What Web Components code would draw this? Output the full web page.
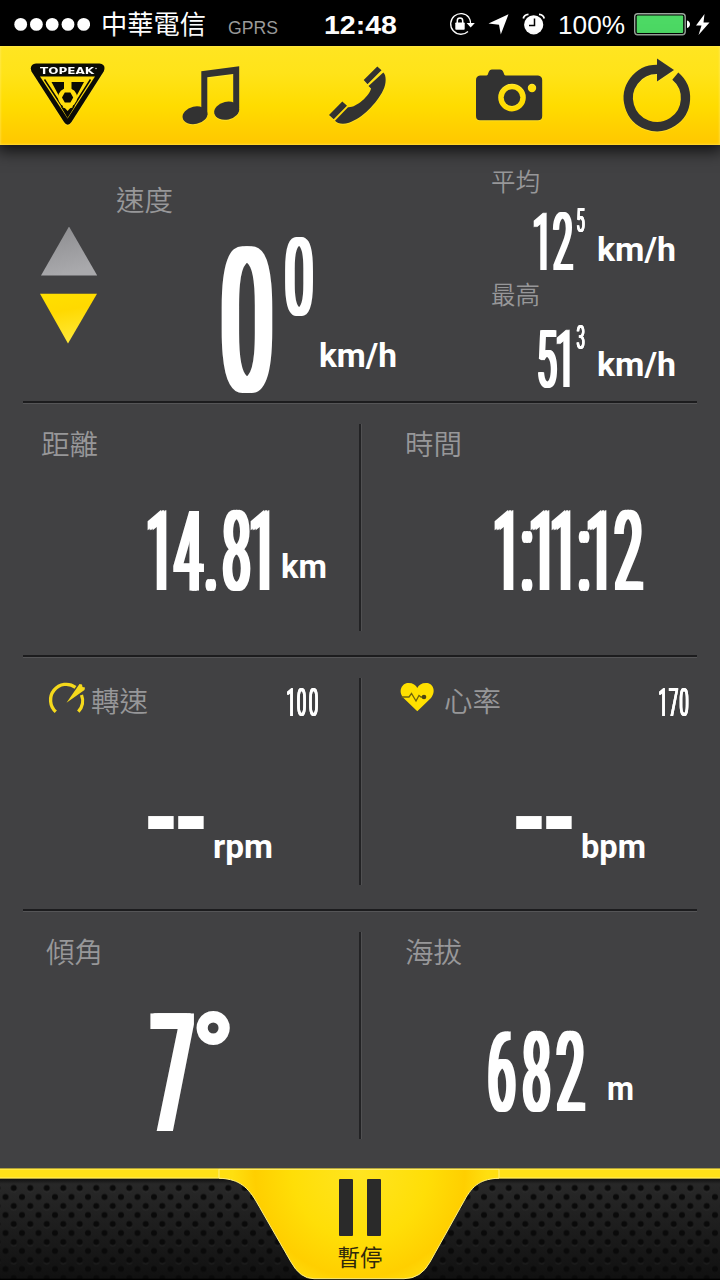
<!DOCTYPE html>
<html lang="zh-Hant">
<head>
<meta charset="utf-8">
<title>Bike computer</title>
<style>
  body {
    margin: 0;
    background: #414143;
    font-family: "Roboto", "Noto Sans CJK TC", sans-serif;
  }
</style>
</head>
<body>
<ride-app></ride-app>

<script>
// One line of text stretched to a given width, baseline on the bottom edge.
class FitText extends HTMLElement {
  connectedCallback() {
    const w = this.getAttribute("w");
    const h = this.getAttribute("h");
    const size = this.getAttribute("size");
    const shadowRoot = this.attachShadow({ mode: "open" });
    shadowRoot.innerHTML = `
<style>
  :host { display: block; flex: none; width: ${w}px; height: ${h}px; }
  svg { display: block; overflow: visible; }
</style>
<svg width="${w}" height="${h}"><text x="0" y="${h}" font-size="${size}" fill="currentColor"
  textLength="${w}" lengthAdjust="spacingAndGlyphs">${this.getAttribute("text")}</text></svg>`;
  }
}
customElements.define("fit-text", FitText);

// Tall narrow digits. "at" holds the centre of each glyph, in px from the left.
// "grow" thickens the squeezed stems sideways only, so they match the bars.
class SlimNumber extends HTMLElement {
  connectedCallback() {
    const w = this.getAttribute("w");
    const cap = Number(this.getAttribute("cap"));
    const squeeze = Number(this.getAttribute("squeeze") || 0.45);
    const grow = this.getAttribute("grow");
    const stroke = this.getAttribute("stroke") || 0;
    const weight = this.getAttribute("weight") || 400;
    const xs = this.getAttribute("at").split(" ").map((x) => (x / squeeze).toFixed(2)).join(" ");
    const filter = grow ? `filter: drop-shadow(${grow}px 0 0 #fff) drop-shadow(-${grow}px 0 0 #fff);` : "";
    const shadowRoot = this.attachShadow({ mode: "open" });
    shadowRoot.innerHTML = `
<style>
  :host { display: block; flex: none; width: ${w}px; height: ${cap}px; ${filter} }
  svg { display: block; overflow: visible; }
  text { font-weight: ${weight}; text-anchor: middle; fill: #fff; stroke: #fff; stroke-width: ${stroke}px; }
</style>
<svg width="${w}" height="${cap}"><text transform="scale(${squeeze} 1)" x="${xs}" y="${cap}"
  font-size="${(cap / 0.711).toFixed(2)}">${this.getAttribute("text")}</text></svg>`;
  }
}
customElements.define("slim-number", SlimNumber);

const statusTemplate = document.createElement("template");
statusTemplate.innerHTML = `
<style>
  :host { display: flex; height: 46px; background: #000; color: #fff; padding-left: 14px; }
  svg { display: block; flex: none; }
  .carrier { margin-left: 11px; font-family: "Noto Sans CJK TC", sans-serif; }
  .net { margin-left: 22px; color: #9b9b9b; }
  .net, .time, .percent { font-family: "Liberation Sans", sans-serif; }
  .time { margin-left: 46px; font-weight: 700; }
  .icons { margin-left: 51px; }
  .percent { margin-left: 10px; }
  .battery { margin-left: 7px; }
</style>
<svg width="76" height="46" fill="#fff">
  <circle cx="6.7" cy="24.4" r="6.4"/><circle cx="22.4" cy="24.4" r="6.4"/><circle cx="38.2" cy="24.4" r="6.4"/>
  <circle cx="54" cy="24.4" r="6.4"/><circle cx="69.7" cy="24.4" r="6.4"/>
</svg>
<fit-text class="carrier" text="中華電信" w="105" h="34" size="26"></fit-text>
<fit-text class="net" text="GPRS" w="50" h="34" size="19"></fit-text>
<fit-text class="time" text="12:48" w="73" h="34" size="26"></fit-text>
<svg class="icons" width="100" height="46" viewBox="448 0 100 46" fill="#fff">
  <path d="M469 17.5A10.3 10.3 0 1 0 468 31.5M467 15.5A10.3 10.3 0 0 1 470.5 24" fill="none" stroke="#fff" stroke-width="1.3"/>
  <path d="M466.6 23h8.2l-4.1 4.6z"/>
  <rect x="455.3" y="22.5" width="9.4" height="7.3" rx=".8"/>
  <path d="M457.3 23v-2.2a2.7 2.7 0 0 1 5.4 0V23" fill="none" stroke="#fff" stroke-width="1.5"/>
  <path d="M508.5 14.2L488.5 23.6L499 24.7L500.8 34.5z"/>
  <circle cx="533.7" cy="24.8" r="9.6"/>
  <path d="M534.5 18.5v7h-5.5" fill="none" stroke="#000" stroke-width="1.5"/>
  <path d="M523.3 18.5c.4-2.3 2.2-4 5.2-4.2M539 14.3c3 .2 4.8 1.9 5.2 4.2" fill="none" stroke="#fff" stroke-width="1.8"/>
</svg>
<fit-text class="percent" text="100%" w="67" h="34" size="26"></fit-text>
<svg class="battery" width="80" height="46" viewBox="632 0 80 46">
  <rect x="634.7" y="13.8" width="50.5" height="21" rx="3" fill="none" stroke="#9aa69c" stroke-width="1.4"/>
  <rect x="636.7" y="15.6" width="46.5" height="17.4" rx="1" fill="#4cd964"/>
  <path d="M687 20.5c4 1 4 6.5 0 7.5z" fill="#fff"/>
  <path d="M704.5 14L696 25.5h5.5L698.5 35L709.5 22.5h-6z" fill="#fff"/>
</svg>`;
class StatusBar extends HTMLElement {
  connectedCallback() {
    this.attachShadow({ mode: "open" }).appendChild(statusTemplate.content);
  }
}
customElements.define("status-bar", StatusBar);

const toolbarTemplate = document.createElement("template");
toolbarTemplate.innerHTML = `
<style>
  :host {
    display: flex;
    box-sizing: border-box;
    height: 99px;
    background: linear-gradient(#ffe522 0, #ffe319 28%, #ffdc00 60%, #ffcb00 92%, #ffc800 100%);
    box-shadow: inset 0 0 2px 1px #fff08066, 0 3px 15px 3px rgba(0, 0, 0, .75);
    position: relative;
  }
  svg { display: block; fill: #323232; filter: drop-shadow(0 1px 0 #ffef6066); }
  .logo text { font: 700 9.5px "DejaVu Sans", sans-serif; fill: #fff; }
</style>
<svg class="logo" width="146" height="99" viewBox="0 46 146 99">
  <path d="M36 63.5H99.5Q106.5 64.5 103.7 71.5L71.5 122Q67.7 127.5 64 122L31.5 71.5Q29 64.5 36 63.5z" fill="#0b0b05"/>
  <path d="M40 76.5H95L67.6 118.5z" fill="#ffdd0c"/>
  <path d="M44.5 79.5L62.5 107M90.5 79.5L73 107" stroke="#0b0b05" stroke-width="1.5"/>
  <path d="M51.5 82H64v7.5q-4 1.5-5 6.5zM84 82H71.5v7.5q4 1.5 5 6.5zM60.5 106q7 5 14.5 0l-7.5 12z" fill="#0b0b05"/>
  <circle cx="67.6" cy="97.5" r="9.5" fill="#ffdd0c"/>
  <path d="M64.8 92.5h5.6l2.8 5l-2.8 5h-5.6l-2.8-5z" fill="#0b0b05"/>
  <path d="M64.5 107.5h6.2l-3.1 3.6z" fill="#ffdd0c"/>
  <text x="40" y="74" textLength="54" lengthAdjust="spacingAndGlyphs">TOPEAK</text>
  <circle cx="96" cy="68.5" r=".7" fill="#fff"/>
</svg>
<svg width="146" height="99" viewBox="146 46 146 99">
  <path d="M201.3 71.3L239.2 66.3V108H233.2V74L207.3 77.3V115H201.3z"/>
  <ellipse cx="195" cy="115.3" rx="12.6" ry="8.7" transform="rotate(-12 195 115.3)"/>
  <ellipse cx="226.7" cy="110.7" rx="12.7" ry="8.9" transform="rotate(-12 226.7 110.7)"/>
</svg>
<svg width="146" height="99" viewBox="292 46 146 99">
  <path d="M329 115L342.3 101.5L347 105.7L333.7 119.3zM363.7 80L377.3 66.5L381.5 70.3L367.5 84.3z"/>
  <path d="M335 120.7L348 107.2C356 108 369.5 96 371 88.5L368.5 86L383.3 72.5C386.5 75 386.5 84 383 90.5C377 103 362 118.5 349 122.7C343 124.7 337.5 123.8 335 120.7z"/>
</svg>
<svg width="146" height="99" viewBox="438 46 146 99">
  <path fill-rule="evenodd" d="M480 75.5H486.5Q488 75 488.5 72.5Q489.5 69.5 492 69.5H500Q502.5 69.5 503.5 72.5Q504 75 505.5 75.5H538Q542.2 76 542.2 80V116Q542.2 120.3 538 120.3H480Q476 120.3 476 116V80Q476 76 480 75.5zM512 83.8A13.8 13.8 0 1 0 512 111.4A13.8 13.8 0 1 0 512 83.8zM532 83.8A4.2 4.2 0 1 0 532 92.2A4.2 4.2 0 1 0 532 83.8z"/>
  <circle cx="512" cy="97.6" r="8.3"/>
</svg>
<svg width="136" height="99" viewBox="584 46 136 99">
  <path d="M675.3 76.1A28.6 28.6 0 1 1 657 69.4" fill="none" stroke="#323232" stroke-width="9.3"/>
  <path d="M657 58.5L674 70L657 81.5z"/>
</svg>`;
class ToolBar extends HTMLElement {
  connectedCallback() {
    this.attachShadow({ mode: "open" }).appendChild(toolbarTemplate.content);
  }
}
customElements.define("tool-bar", ToolBar);

// Current speed on the left, average and maximum on the right
const speedTemplate = document.createElement("template");
speedTemplate.innerHTML = `
<style>
  :host { display: flex; height: 255px; color: #fff; font-weight: 700; }
  .label { font: 350 28.5px/29px "Noto Sans CJK TC", sans-serif; color: #979799; }
  .trend { width: 116px; padding-top: 82px; }
  .trend svg { display: block; }
  .main { width: 375px; padding-top: 39px; }
  .main .value { display: flex; align-items: flex-end; padding: 35px 0 0 105px; }
  .tenth { align-self: flex-start; margin-left: 11px; margin-top: -10px; }
  .main fit-text { margin: 0 0 24px 5px; }
  .side { padding-top: 23px; }
  .side .label { font-size: 24.5px; line-height: 25px; }
  .side .value { display: flex; align-items: flex-end; height: 77px; padding-left: 46px; }
  .side .value.max { height: 81px; }
  .side .label + .value + .label { margin-top: 11px; }
  .side .tenth { margin: 0; align-self: flex-end; margin-bottom: 38px; }
  .side fit-text { margin: 0 0 9px 12px; }
  .side .max fit-text { margin-bottom: 11px; }
</style>
<div class="trend">
  <svg width="116" height="120" viewBox="0 227 116 120">
    <defs>
      <linearGradient id="up" x1="0" y1="0" x2=".3" y2="1"><stop offset="0" stop-color="#8b8b8e"/><stop offset="1" stop-color="#a9a9ac"/></linearGradient>
      <linearGradient id="down" x1="0" y1="0" x2=".2" y2="1"><stop offset="0" stop-color="#ffe000"/><stop offset=".4" stop-color="#ffd900"/><stop offset="1" stop-color="#ffe835"/></linearGradient>
    </defs>
    <path d="M69 226.5L97.2 275.5H41z" fill="url(#up)"/>
    <path d="M40 293.7H97L68 343.5z" fill="url(#down)"/>
  </svg>
</div>
<div class="main">
  <div class="label">速度</div>
  <div class="value">
    <slim-number text="0" w="53" cap="143" at="26.5" squeeze=".46" grow="4.4"></slim-number>
    <slim-number class="tenth" text="0" w="29" cap="77" at="14.5" squeeze=".47" grow="2.2"></slim-number>
    <fit-text text="km/h" w="78" h="24" size="33"></fit-text>
  </div>
</div>
<div class="side">
  <div class="label">平均</div>
  <div class="value">
    <slim-number text="12" w="39" cap="57" at="6 26.5" grow="1.7"></slim-number>
    <slim-number class="tenth" text="5" w="9" cap="23" at="5" squeeze=".47" grow=".6"></slim-number>
    <fit-text text="km/h" w="79" h="24" size="33"></fit-text>
  </div>
  <div class="label">最高</div>
  <div class="value max">
    <slim-number text="51" w="39" cap="57" at="10.5 29" grow="1.7"></slim-number>
    <slim-number class="tenth" text="3" w="9" cap="23" at="5.3" squeeze=".47" grow=".6"></slim-number>
    <fit-text text="km/h" w="79" h="24" size="33"></fit-text>
  </div>
</div>`;
class SpeedPanel extends HTMLElement {
  connectedCallback() {
    this.attachShadow({ mode: "open" }).appendChild(speedTemplate.content);
  }
}
customElements.define("speed-panel", SpeedPanel);

const cellTemplate = document.createElement("template");
cellTemplate.innerHTML = `
<style>
  :host { display: flex; flex-direction: column; box-sizing: border-box; width: 360px; }
  .head { display: flex; height: 29px; }
  .label { font: 350 28.5px/29px "Noto Sans CJK TC", sans-serif; color: #979799; white-space: nowrap; }
  .value { display: flex; align-items: flex-end; margin-top: auto; color: #fff; font-weight: 700; }
</style>
<div class="head">
  <slot name="icon"></slot>
  <div class="label"><slot name="label"></slot></div>
  <slot name="limit"></slot>
</div>
<div class="value"><slot></slot></div>`;
class MetricCell extends HTMLElement {
  connectedCallback() {
    this.attachShadow({ mode: "open" }).appendChild(cellTemplate.content.cloneNode(true));
  }
}
customElements.define("metric-cell", MetricCell);

// Two cells with the engraved lines above and between them
const rowTemplate = document.createElement("template");
rowTemplate.innerHTML = `
<style>
  :host {
    display: flex;
    box-sizing: border-box;
    height: 254px;
    background:
      linear-gradient(#1c1c1e, #1c1c1e) 23px 1px / 674px 2px no-repeat,
      linear-gradient(#555557, #555557) 23px 3px / 674px 1px no-repeat,
      linear-gradient(#222224, #222224) 359px 24px / 2px 207px no-repeat,
      linear-gradient(#505052, #505052) 361px 24px / 1px 207px no-repeat;
  }
</style>
<slot></slot>`;
class MetricRow extends HTMLElement {
  connectedCallback() {
    this.attachShadow({ mode: "open" }).appendChild(rowTemplate.content.cloneNode(true));
  }
}
customElements.define("metric-row", MetricRow);

const pauseTemplate = document.createElement("template");
pauseTemplate.innerHTML = `
<style>
  :host { display: grid; height: 112px; }
  svg, .content { grid-area: 1 / 1; display: block; }
  .content { display: flex; flex-direction: column; align-items: center; padding-top: 11px; z-index: 1; }
  .bars { display: flex; gap: 14px; }
  .bars i { width: 14px; height: 57px; background: #2a2a2a; border-radius: 1px; }
  .caption { margin-top: 8px; font: 400 22.5px/24px "Noto Sans CJK TC", sans-serif; color: #30290c; }
</style>
<svg width="720" height="112" viewBox="0 1168 720 112">
  <defs>
    <linearGradient id="mesh" x1="0" y1="0" x2="0" y2="1"><stop offset="0" stop-color="#2c2c2c"/><stop offset="1" stop-color="#101010"/></linearGradient>
    <linearGradient id="edge" x1="0" y1="0" x2="0" y2="1"><stop offset="0" stop-color="#000" stop-opacity=".7"/><stop offset="1" stop-color="#000" stop-opacity="0"/></linearGradient>
    <radialGradient id="tab" gradientUnits="userSpaceOnUse" cx="360" cy="1172" r="150"><stop offset="0" stop-color="#ffe521"/><stop offset=".45" stop-color="#ffde07"/><stop offset=".7" stop-color="#ffcf00"/><stop offset=".85" stop-color="#ffdf10"/></radialGradient>
    <pattern id="holes" patternUnits="userSpaceOnUse" x="5.5" y="1183.5" width="16.5" height="18">
      <circle cx="8.25" cy="4.5" r="3" fill="#0a0a0a"/>
      <circle cx="0" cy="13.5" r="3" fill="#0a0a0a"/><circle cx="16.5" cy="13.5" r="3" fill="#0a0a0a"/>
      <path d="M5.5 7.5q2.7 2 5.5 0" fill="none" stroke="#3a3a3a" stroke-width=".6" opacity=".6"/>
    </pattern>
  </defs>
  <rect y="1168" width="720" height="112" fill="url(#mesh)"/>
  <rect y="1183.5" width="720" height="97" fill="url(#holes)"/>
  <rect y="1178" width="720" height="6" fill="url(#edge)"/>
  <rect y="1278.7" width="720" height="1.3" fill="#000"/>
  <rect y="1168.5" width="720" height="9.8" fill="#ffe119"/>
  <path d="M0 1169H720M0 1178H720" stroke="#ffee70"/>
  <path d="M219 1169H499V1178.2C482 1179 473 1184 464 1201L430 1262Q421 1278.7 404 1278.7H314Q300 1278.7 291 1262L256 1201C246 1184 236 1179 219 1178.2z" fill="url(#tab)"/>
  <path d="M499 1178.2C482 1179 473 1184 464 1201L430 1262Q421 1278.7 404 1278.7H314Q300 1278.7 291 1262L256 1201C246 1184 236 1179 219 1178.2M219 1169V1178M499 1169V1178M219 1169.3H499" fill="none" stroke="#fff080" stroke-width="1"/>
  <path d="M0 1168.2H720" stroke="#9d8d25" stroke-width=".8"/>
</svg>
<div class="content">
  <div class="bars"><i></i><i></i></div>
  <div class="caption">暫停</div>
</div>`;
class PauseBar extends HTMLElement {
  connectedCallback() {
    this.attachShadow({ mode: "open" }).appendChild(pauseTemplate.content);
  }
}
customElements.define("pause-bar", PauseBar);

const appTemplate = document.createElement("template");
appTemplate.innerHTML = `
<style>
  :host { display: flex; flex-direction: column; width: 720px; height: 1280px; overflow: hidden; background: #414143; }
  svg { display: block; flex: none; overflow: visible; }
  .last { height: 260px; }
  .dash { font-family: "DejaVu Sans", sans-serif; }

  .distance { padding: 28px 0 64px 41px; }
  .distance slim-number { margin-left: 113px; }
  .distance fit-text { margin: 0 0 12px 10px; }
  .time { padding: 28px 0 64px 45px; }
  .time slim-number { margin-left: 97px; }

  .cadence { padding: 31px 0 50px 49px; }
  .cadence svg { margin: 2px 5px 0 0; }
  .cadence [slot="limit"] { margin: 4px 0 0 141px; }
  .cadence .dash { margin: 0 0 9px 99px; }
  .cadence fit-text { margin-left: 9px; }
  .heart { padding: 31px 0 50px 40px; }
  .heart svg { margin: 2px 8px 0 0; }
  .heart [slot="limit"] { margin: 4px 0 0 160px; }
  .heart .dash { margin: 0 0 9px 116px; }
  .heart fit-text { margin-left: 9px; }

  .grade { padding: 28px 0 37px 46px; }
  .grade .seven { margin-left: 106px; }
  .grade .degree { margin: 0 0 32px 3px; }
  .altitude { padding: 28px 0 57px 45px; }
  .altitude slim-number { margin-left: 82px; }
  .altitude fit-text { margin: 0 0 11px 22px; }
</style>
<status-bar></status-bar>
<tool-bar></tool-bar>
<speed-panel></speed-panel>

<metric-row>
  <metric-cell class="distance">
    <span slot="label">距離</span>
    <slim-number text="14.81" w="117" cap="79" at="6.5 35 57.5 83 109.5" grow="2.5"></slim-number>
    <fit-text text="km" w="46" h="24" size="33"></fit-text>
  </metric-cell>
  <metric-cell class="time">
    <span slot="label">時間</span>
    <slim-number text="1:11:12" w="142" cap="79" at="5.5 25.5 41.5 62.5 82.5 98.5 127" grow="2.5"></slim-number>
  </metric-cell>
</metric-row>

<metric-row>
  <metric-cell class="cadence">
    <svg slot="icon" width="37" height="29" viewBox="49 687 37 29">
      <path d="M55.8 711.7A15.7 15.7 0 0 1 75.5 687.3M81.5 695A15.7 15.7 0 0 1 78.3 711.7" fill="none" stroke="#f5d91c" stroke-width="3.3"/>
      <path d="M66.5 702.7L79.5 684L82 684.5L82.5 687L85 687.5L84.5 690z" fill="#f5d91c"/>
    </svg>
    <span slot="label">轉速</span>
    <slim-number slot="limit" text="100" w="31" cap="27" at="2.5 13 25" grow=".7"></slim-number>
    <slim-number class="dash" text="--" w="56" cap="64" at="13 43" squeeze=".92" weight="700"></slim-number>
    <fit-text text="rpm" w="60" h="24" size="33"></fit-text>
  </metric-cell>
  <metric-cell class="heart">
    <svg slot="icon" width="36" height="29" viewBox="400 687 36 29">
      <path d="M417.3 711.3L403.5 698C397.5 691 402 683 408.5 683C413 683 416 685 417.3 688C418.6 685 421.5 683 426 683C433 683 436.5 691 431 698z" fill="#ffe000"/>
      <path d="M401.5 697H409L411.5 693.5L416 701L419 695.5L421 697H425" fill="none" stroke="#6e630c" stroke-width="1.3"/>
      <circle cx="424" cy="697" r="2.3" fill="#4c4512"/>
    </svg>
    <span slot="label">心率</span>
    <slim-number slot="limit" text="170" w="31" cap="27" at="2.5 13 23.5" grow=".7"></slim-number>
    <slim-number class="dash" text="--" w="56" cap="64" at="13 43" squeeze=".92" weight="700"></slim-number>
    <fit-text text="bpm" w="65" h="24" size="33"></fit-text>
  </metric-cell>
</metric-row>

<metric-row class="last">
  <metric-cell class="grade">
    <span slot="label">傾角</span>
    <slim-number class="seven" text="7" w="42" cap="117" at="21" squeeze=".45" grow="3.6" weight="500"></slim-number>
    <slim-number class="degree" text="°" w="32" cap="84" at="16" squeeze="1" stroke="4"></slim-number>
  </metric-cell>
  <metric-cell class="altitude">
    <span slot="label">海拔</span>
    <slim-number text="682" w="98" cap="79" at="15 50 84" grow="2.5"></slim-number>
    <fit-text text="m" w="27" h="24" size="33"></fit-text>
  </metric-cell>
</metric-row>

<pause-bar></pause-bar>`;
class RideApp extends HTMLElement {
  connectedCallback() {
    this.attachShadow({ mode: "open" }).appendChild(appTemplate.content);
  }
}
customElements.define("ride-app", RideApp);
</script>
</body>
</html>
